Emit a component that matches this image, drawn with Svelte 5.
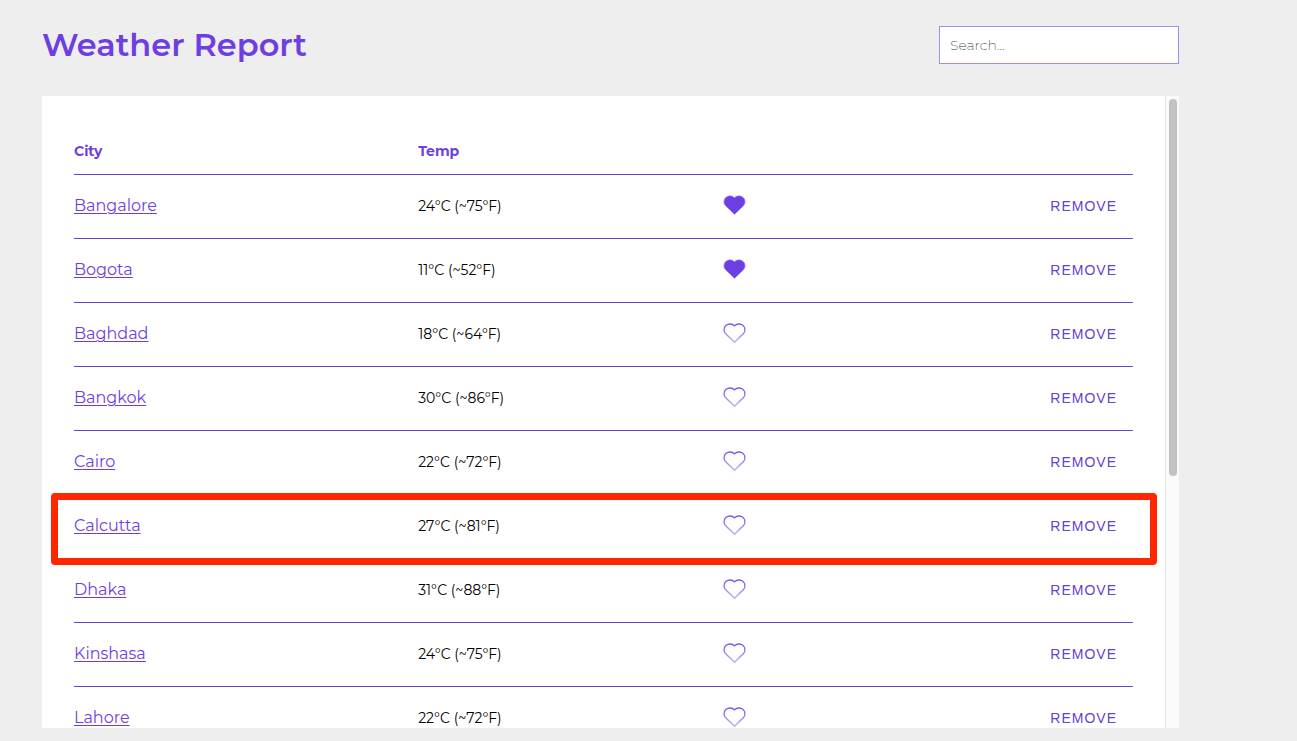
<script>
  const rows = [
    { city: 'Bangalore', temp: '24°C (~75°F)', liked: true },
    { city: 'Bogota', temp: '11°C (~52°F)', liked: true },
    { city: 'Baghdad', temp: '18°C (~64°F)' },
    { city: 'Bangkok', temp: '30°C (~86°F)' },
    { city: 'Cairo', temp: '22°C (~72°F)' },
    { city: 'Calcutta', temp: '27°C (~81°F)', marked: true },
    { city: 'Dhaka', temp: '31°C (~88°F)' },
    { city: 'Kinshasa', temp: '24°C (~75°F)' },
    { city: 'Lahore', temp: '22°C (~72°F)' }
  ];
</script>

<div class="page">
  <header>
    <h1>Weather Report</h1>
    <input type="search" placeholder="Search..." aria-label="Search" />
  </header>
  <main>
    <div class="content">
      <table>
        <thead>
          <tr>
            <th class="city">City</th>
            <th class="temp">Temp</th>
            <th class="like"></th>
            <th></th>
          </tr>
        </thead>
        <tbody>
          {#each rows as row}
            <tr class:marked={row.marked}>
              <td><a href="#{row.city}">{row.city}</a></td>
              <td>{row.temp}</td>
              <td>
                <button class="heart" aria-label="Favourite {row.city}" aria-pressed={!!row.liked}>
                  <svg width="24" height="22" viewBox="0 0 24 22">
                    <defs>
                      <linearGradient id="fade-{row.city}" x1="0" y1="0" x2="0" y2="1">
                        <stop offset="0" stop-color="#8054e4" />
                        <stop offset="1" stop-color="#c2aef3" />
                      </linearGradient>
                    </defs>
                    <path
                      d="M11.5 19.3 L2.7 10.8 C0.4 8.5 0.6 4.5 2.9 2.5 C5.5 0.3 9.3 0.4 11.5 2.9 C13.7 0.4 17.5 0.3 20.1 2.5 C22.4 4.5 22.6 8.5 20.3 10.8 Z"
                      fill={row.liked ? '#6e3fe0' : 'none'}
                      stroke={row.liked ? '#8c66e8' : `url(#fade-${row.city})`}
                      stroke-width={row.liked ? 0.8 : 1.4}
                    />
                  </svg>
                </button>
              </td>
              <td class="action">
                <button class="remove">REMOVE</button>
                {#if row.marked}<div class="frame"></div>{/if}
              </td>
            </tr>
          {/each}
        </tbody>
      </table>
    </div>
    <div class="track"><div class="thumb"></div></div>
  </main>
</div>

<style>
  :global(body) {
    margin: 0;
    background: #eee;
  }
  .page {
    box-sizing: border-box;
    height: 100vh;
    display: flex;
    flex-direction: column;
    padding: 26px 118px 13px 42px;
    font-family: Montserrat, Inter, sans-serif;
    font-size: 14px;
    color: #000;
  }
  header {
    display: flex;
    justify-content: space-between;
    align-items: center;
    margin-bottom: 32px;
  }
  h1 {
    margin: 0;
    font-size: 32px;
    line-height: 38px;
    font-weight: 600;
    color: #6e3fe0;
  }
  input {
    box-sizing: border-box;
    width: 240px;
    height: 38px;
    padding: 0 10px;
    border: 1px solid #a68af0;
    border-radius: 0;
    background: #fff;
    font: 200 14px Montserrat, Inter, sans-serif;
    appearance: none;
  }
  input::placeholder {
    color: #333;
  }
  main {
    flex: 1;
    min-height: 0;
    display: flex;
    background: #fff;
    overflow: hidden;
  }
  .content {
    flex: 1;
    padding: 32px 32px 0;
  }
  .track {
    box-sizing: border-box;
    width: 14px;
    padding: 3px 2px 0 3px;
    background: #fafafa;
    border-left: 1px solid #e8e8e8;
  }
  .thumb {
    height: 60%;
    border-radius: 4px;
    background: #c1c1c1;
  }
  table {
    width: 100%;
    table-layout: fixed;
    border-collapse: separate;
    border-spacing: 0;
  }
  th,
  td {
    box-sizing: border-box;
    padding: 0;
    text-align: left;
    border-bottom: 1px solid #6e3fe0;
  }
  th {
    height: 47px;
    font-weight: 700;
    color: #6e3fe0;
  }
  td {
    height: 64px;
    padding-bottom: 2px;
  }
  .city {
    width: 32.5%;
  }
  .temp {
    width: 28.8%;
  }
  .like {
    width: 19%;
  }
  a {
    font-size: 16px;
    color: #6e3fe0;
    text-underline-offset: 2px;
    text-decoration-thickness: 1px;
  }
  button {
    border: 0;
    background: none;
    cursor: pointer;
  }
  .heart {
    display: block;
    padding: 0;
  }
  .heart svg {
    display: block;
  }
  .action {
    text-align: right;
  }
  .remove {
    padding: 8px 16px;
    font: 14px "Liberation Sans", Arial, sans-serif;
    letter-spacing: 1px;
    color: #6440d6;
  }
  .marked {
    position: relative;
  }
  .frame {
    position: absolute;
    inset: -2px -24px -6px -23px;
    border: 7px solid #ff2600;
    border-radius: 4px;
    pointer-events: none;
  }
</style>
